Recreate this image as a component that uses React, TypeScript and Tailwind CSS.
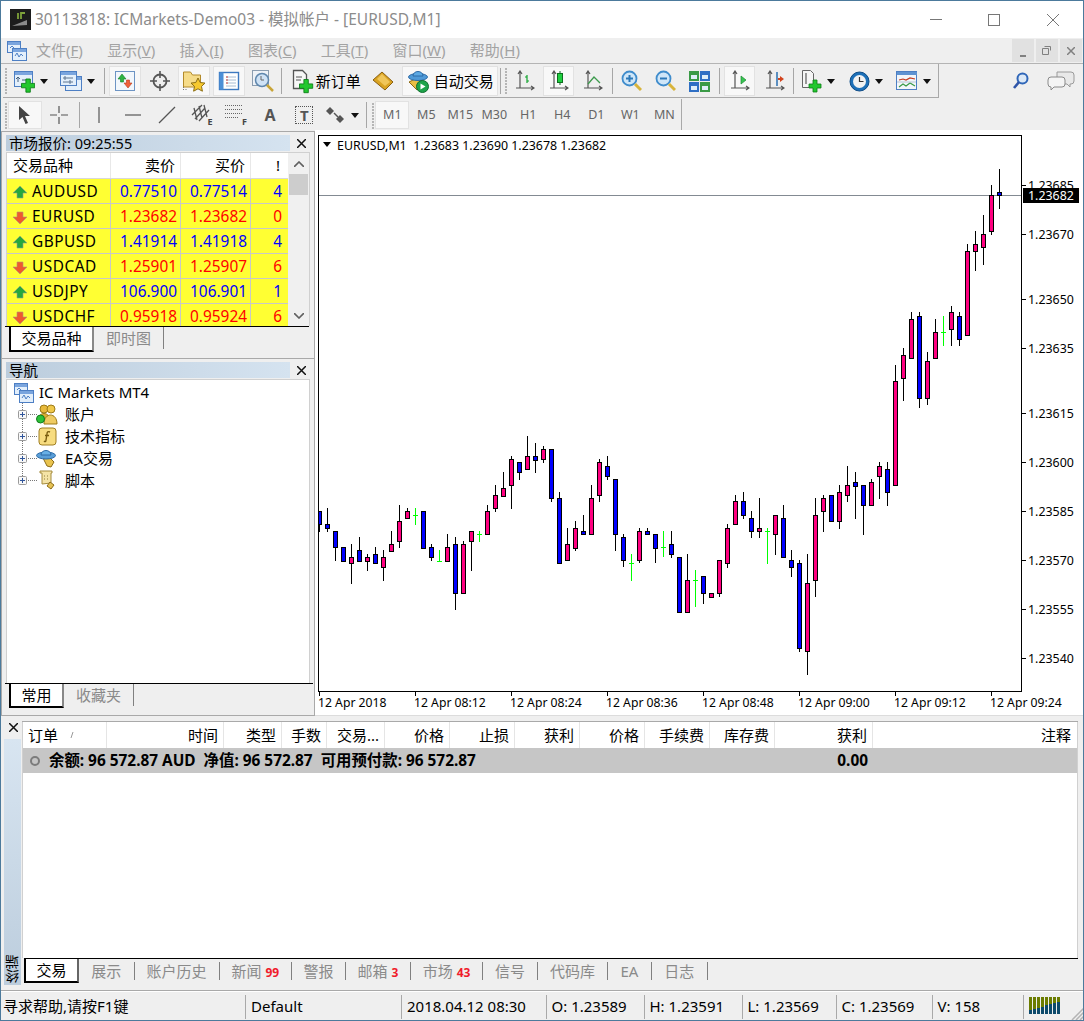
import type { ReactNode } from 'react';

// [wick top, body top, body bottom, wick bottom, kind] in screen pixels, one candle every 8px
type Candle = [number, number, number, number, 'u' | 'd' | 'g'];

const candles: Candle[] = [
    [511, 511, 524, 532, 'd'], [508, 524, 528, 532, 'd'], [531, 531, 547, 561, 'd'], [547, 547, 561, 561, 'd'],
    [544, 557, 563, 584, 'u'], [537, 550, 561, 561, 'd'], [554, 557, 561, 571, 'u'], [547, 554, 563, 563, 'd'],
    [550, 557, 567, 581, 'u'], [531, 544, 551, 551, 'u'], [505, 521, 541, 548, 'u'], [508, 511, 518, 518, 'u'],
    [508, 515, 515, 525, 'g'], [511, 511, 548, 548, 'd'], [544, 547, 557, 561, 'd'], [550, 561, 561, 561, 'g'],
    [534, 547, 561, 561, 'u'], [537, 544, 593, 610, 'd'], [541, 544, 593, 593, 'u'], [531, 531, 541, 571, 'u'],
    [531, 534, 534, 542, 'g'], [505, 511, 534, 534, 'u'], [485, 495, 508, 512, 'u'], [472, 488, 496, 496, 'u'],
    [456, 459, 485, 509, 'u'], [462, 462, 472, 480, 'd'], [436, 456, 469, 469, 'u'], [443, 456, 460, 473, 'd'],
    [446, 449, 459, 463, 'u'], [449, 449, 498, 502, 'd'], [492, 498, 563, 563, 'd'], [528, 544, 560, 560, 'u'],
    [521, 528, 548, 551, 'u'], [515, 531, 534, 534, 'd'], [485, 498, 534, 534, 'u'], [459, 462, 495, 502, 'u'],
    [456, 466, 476, 480, 'd'], [479, 479, 534, 551, 'd'], [534, 537, 560, 567, 'd'], [554, 563, 563, 581, 'g'],
    [528, 531, 560, 563, 'u'], [528, 531, 534, 534, 'd'], [534, 534, 548, 563, 'd'], [531, 547, 547, 557, 'g'],
    [531, 544, 554, 558, 'd'], [557, 557, 612, 612, 'd'], [554, 580, 612, 612, 'u'], [570, 580, 580, 607, 'g'],
    [576, 576, 593, 604, 'd'], [593, 593, 597, 597, 'u'], [560, 560, 593, 597, 'u'], [524, 528, 563, 568, 'u'],
    [495, 501, 524, 524, 'u'], [492, 501, 515, 519, 'd'], [511, 518, 531, 538, 'd'], [498, 528, 531, 538, 'u'],
    [528, 531, 531, 564, 'g'], [515, 515, 534, 555, 'u'], [505, 518, 557, 557, 'd'], [550, 560, 567, 577, 'd'],
    [560, 563, 648, 652, 'd'], [554, 583, 651, 675, 'u'], [498, 515, 580, 597, 'u'], [495, 498, 511, 532, 'u'],
    [495, 495, 521, 521, 'd'], [485, 492, 521, 529, 'u'], [466, 485, 495, 502, 'u'], [472, 482, 486, 519, 'd'],
    [485, 485, 505, 535, 'd'], [479, 482, 505, 505, 'u'], [462, 466, 476, 499, 'u'], [462, 469, 492, 506, 'd'],
    [365, 381, 485, 485, 'u'], [348, 355, 378, 401, 'u'], [312, 319, 358, 358, 'u'], [312, 316, 398, 408, 'd'],
    [352, 361, 398, 405, 'u'], [319, 332, 358, 358, 'u'], [316, 332, 332, 346, 'g'], [306, 312, 329, 346, 'u'],
    [312, 316, 339, 346, 'd'], [244, 251, 335, 335, 'u'], [231, 244, 251, 271, 'u'], [215, 234, 247, 265, 'u'],
    [185, 195, 231, 235, 'u'], [169, 192, 195, 209, 'd'],
];

const priceLabels: [string, number][] = [
    ['1.23685', 185], ['1.23670', 234], ['1.23650', 299], ['1.23635', 348], ['1.23615', 413],
    ['1.23600', 462], ['1.23585', 511], ['1.23570', 560], ['1.23555', 609], ['1.23540', 658],
];

const timeLabels: [string, number][] = [
    ['12 Apr 2018', 319], ['12 Apr 08:12', 415], ['12 Apr 08:24', 511], ['12 Apr 08:36', 607],
    ['12 Apr 08:48', 703], ['12 Apr 09:00', 799], ['12 Apr 09:12', 895], ['12 Apr 09:24', 991],
];

const quotes = [
    { symbol: 'AUDUSD', bid: '0.77510', ask: '0.77514', spread: '4', up: true },
    { symbol: 'EURUSD', bid: '1.23682', ask: '1.23682', spread: '0', up: false },
    { symbol: 'GBPUSD', bid: '1.41914', ask: '1.41918', spread: '4', up: true },
    { symbol: 'USDCAD', bid: '1.25901', ask: '1.25907', spread: '6', up: false },
    { symbol: 'USDJPY', bid: '106.900', ask: '106.901', spread: '1', up: true },
    { symbol: 'USDCHF', bid: '0.95918', ask: '0.95924', spread: '6', up: false },
];

const columns = [
    { label: '时间', w: 'w-[117.5px]' }, { label: '类型', w: 'w-[58px]' }, { label: '手数', w: 'w-[45px]' },
    { label: '交易...', w: 'w-[58px]' }, { label: '价格', w: 'w-[65px]' }, { label: '止损', w: 'w-[65px]' },
    { label: '获利', w: 'w-[65px]' }, { label: '价格', w: 'w-[65px]' }, { label: '手续费', w: 'w-[65px]' },
    { label: '库存费', w: 'w-[65px]' }, { label: '获利', w: 'w-[98px]' },
];

const Caret = () => (
    <svg width="8" height="5" viewBox="0 0 8 5" className="shrink-0"><path d="M0 0h8L4 5z" fill="#111" /></svg>
);

const Ico = ({ children, w = 24, h = 24 }: { children: ReactNode; w?: number; h?: number }) => (
    <svg width={w} height={h} viewBox={`0 0 ${w} ${h}`} className="shrink-0">{children}</svg>
);

const GreenPlus = ({ x, y, s = 1 }: { x: number; y: number; s?: number }) => (
    <path
        transform={`translate(${x} ${y}) scale(${s})`}
        d="M4 0h4v4h4v4H8v4H4V8H0V4h4z"
        fill="#22c72e"
        stroke="#0d7d18"
        strokeWidth="0.8"
    />
);

const MiniWindow = ({ x, y, w, h }: { x: number; y: number; w: number; h: number }) => (
    <g>
        <rect x={x + 0.5} y={y + 0.5} width={w} height={h} fill="#e3effb" stroke="#4d7fc4" />
        <rect x={x + 1} y={y + 1} width={w - 1} height={3} fill="#7aa5de" />
    </g>
);

const ChartsIcon = () => (
    <Ico w={21} h={21}>
        <MiniWindow x={1} y={1} w={13} h={11} />
        <MiniWindow x={6} y={8} w={14} h={12} />
        <path d="M9 16l2-3 2 4 2-3 2 2" fill="none" stroke="#4d7fc4" />
        <path d="M4 8l2-2 2 2" fill="none" stroke="#4d7fc4" />
    </Ico>
);

const NewChartIcon = () => (
    <Ico w={22} h={24}>
        <MiniWindow x={1} y={2} w={18} h={15} />
        <path d="M5 13V8m-2 2 2-2 2 2M9 11h6" fill="none" stroke="#46607c" />
        <GreenPlus x={8.5} y={10} s={1.1} />
    </Ico>
);

const ProfilesIcon = () => (
    <Ico w={23} h={24}>
        <MiniWindow x={6} y={7} w={16} h={14} />
        <MiniWindow x={1} y={2} w={16} h={14} />
        <path d="M4 9h10M4 13h10M6 7v4M11 11v4" fill="none" stroke="#5c7590" />
    </Ico>
);

const MarketIcon = () => (
    <Ico w={22} h={22}>
        <rect x="1.5" y="1.5" width="19" height="19" fill="#f2f7fc" stroke="#6d94c4" />
        <path d="M4 9l4-5 4 5H9.5v3h-3V9z" fill="#2fb344" stroke="#168026" strokeWidth=".6" />
        <path d="M10 13l4 5 4-5h-2.5v-3h-3v3z" fill="#f0603a" stroke="#b83a18" strokeWidth=".6" />
    </Ico>
);

const TargetIcon = () => (
    <Ico w={22} h={22}>
        <circle cx="11" cy="11" r="6.5" fill="#eee" stroke="#555" strokeWidth="1.8" />
        <path d="M11 1v7M11 14v7M1 11h7M14 11h7" stroke="#555" strokeWidth="1.6" />
    </Ico>
);

const FavoritesIcon = () => (
    <Ico w={24} h={24}>
        <path d="M1.5 3h7l2 3h8v12h-17z" fill="#f6dc8a" stroke="#b38a2a" />
        <path d="M1.5 18v4M4 20v2" stroke="#777" strokeDasharray="1 1" />
        <path d="M16 9l2.2 4.5 4.8.6-3.5 3.3.9 4.8-4.4-2.4-4.4 2.4.9-4.8-3.5-3.3 4.8-.6z" fill="#f7c92e" stroke="#8c6e14" />
    </Ico>
);

const TerminalIcon = () => (
    <Ico w={22} h={22}>
        <rect x="1.5" y="2.5" width="19" height="17" fill="#fff" stroke="#3d79c0" strokeWidth="1.4" />
        <rect x="1.5" y="2.5" width="4" height="17" fill="#4c8fd6" />
        <path d="M8 7h10M8 10h10M8 13h10M8 16h10" stroke="#a8bcd2" />
        <path d="M8 7h2M8 10h2M8 13h2" stroke="#d2453a" />
    </Ico>
);

const TesterIcon = () => (
    <Ico w={24} h={24}>
        <rect x="1.5" y="1.5" width="16" height="15" fill="#eef2f7" stroke="#8b9db0" />
        <circle cx="11" cy="11" r="6.5" fill="#cfe2f5" stroke="#5f87ad" strokeWidth="1.5" />
        <path d="M10 7v4h3" fill="none" stroke="#666" />
        <path d="M16 16l6 6" stroke="#c9a538" strokeWidth="2.5" />
    </Ico>
);

const NewOrderIcon = () => (
    <Ico w={23} h={25}>
        <path d="M2.5 1.5h9l4 4v14h-13z" fill="#f7f7f7" stroke="#555" strokeWidth="1.3" />
        <path d="M5 8h6M5 11h5" stroke="#555" />
        <GreenPlus x={8.5} y={10.5} s={1.1} />
    </Ico>
);

const EditorIcon = () => (
    <Ico w={22} h={20}>
        <path d="M10 1l11 10-8 8L1 9z" fill="#d9a322" stroke="#8a5f10" />
        <path d="M10 3l8 8-5 4-8-7z" fill="#f0c65a" />
    </Ico>
);

const AutoIcon = () => (
    <Ico w={22} h={23}>
        <path d="M2 12l8 8 8-6-6-7z" fill="#e9be45" stroke="#8c6c18" />
        <ellipse cx="11" cy="7" rx="9.5" ry="3.5" fill="#4f9ad8" stroke="#2c6aa6" />
        <path d="M6 6c0-6 10-6 10 0z" fill="#5ca9e4" stroke="#2c6aa6" />
        <circle cx="15.5" cy="16.5" r="6" fill="#1ea34a" stroke="#0e6e2d" />
        <path d="M13.5 13.5v6l5-3z" fill="#fff" />
    </Ico>
);

const Axes = () => <path d="M5 1v17M1 18h18M3 4l2-3 2 3M16 16l3 2-3 2" fill="none" stroke="#555" strokeWidth="1.2" />;

const BarChartIcon = () => (
    <Ico w={20} h={22}>
        <Axes />
        <path d="M12 5v8M10 7h2M12 11h2" stroke="#0fa32c" strokeWidth="1.2" fill="none" />
    </Ico>
);

const CandleIcon = () => (
    <Ico w={20} h={22}>
        <Axes />
        <path d="M11 1v14" stroke="#0b6e1e" />
        <rect x="8.5" y="3.5" width="5" height="9" fill="#1fcf3f" stroke="#0b6e1e" />
    </Ico>
);

const LineIcon = () => (
    <Ico w={20} h={22}>
        <Axes />
        <path d="M5 14l6-7 6 6" fill="none" stroke="#3c9a4c" strokeWidth="1.3" />
    </Ico>
);

const ZoomIcon = ({ plus }: { plus?: boolean }) => (
    <Ico w={21} h={22}>
        <circle cx="8.5" cy="8.5" r="7" fill="#cfe6f8" stroke="#3f8ccc" strokeWidth="1.8" />
        <path d={plus ? 'M5 8.5h7M8.5 5v7' : 'M5 8.5h7'} stroke="#2c78b8" strokeWidth="2" />
        <path d="M14 14l6 6" stroke="#d8b43c" strokeWidth="3" />
    </Ico>
);

const TileIcon = () => (
    <Ico w={21} h={21}>
        <rect x="0" y="0" width="10" height="10" fill="#3a9a46" />
        <rect x="11" y="0" width="10" height="10" fill="#2f6fc4" />
        <rect x="0" y="11" width="10" height="10" fill="#2f6fc4" />
        <rect x="11" y="11" width="10" height="10" fill="#3a9a46" />
        <path d="M2 4h6v4H2zM13 4h6v4h-6zM2 15h6v4H2zM13 15h6v4h-6z" fill="#dfeef8" />
    </Ico>
);

const ScrollIcon = () => (
    <Ico w={20} h={22}>
        <Axes />
        <path d="M11 6v8l5-4z" fill="#38c452" stroke="#1a8a30" strokeWidth=".7" />
    </Ico>
);

const ShiftIcon = () => (
    <Ico w={20} h={22}>
        <Axes />
        <path d="M12 2v14" stroke="#2a6fb0" strokeWidth="1.5" />
        <path d="M19 9l-4-3v2h-2v2h2v2z" fill="#d2431c" />
    </Ico>
);

const IndicatorIcon = () => (
    <Ico w={21} h={24}>
        <path d="M1.5 1.5h8l3 3v14h-11z" fill="#f5f5f5" stroke="#666" />
        <path d="M5 4v11" stroke="#666" strokeWidth="1.3" />
        <GreenPlus x={8} y={11} />
    </Ico>
);

const ClockIcon = () => (
    <Ico w={21} h={21}>
        <circle cx="10.5" cy="10.5" r="9.5" fill="#1d70b8" stroke="#0c4a86" />
        <circle cx="10.5" cy="10.5" r="6.5" fill="#f2f2f2" />
        <path d="M10.5 6v4.5h4" fill="none" stroke="#333" strokeWidth="1.2" />
    </Ico>
);

const TemplateIcon = () => (
    <Ico w={22} h={20}>
        <rect x=".5" y=".5" width="20" height="18" fill="#f3f6fa" stroke="#4d7fc4" />
        <rect x="1" y="1" width="20" height="3" fill="#5f93d2" />
        <path d="M3 9l4-1 3 1 4-2 5 1" fill="none" stroke="#c4391e" strokeWidth="1.2" />
        <path d="M3 16l4-3 3 2 4-3 5 3" fill="none" stroke="#3a9a46" strokeWidth="1.2" />
        <path d="M1 11h19" stroke="#b7c6d6" />
    </Ico>
);

const SearchIcon = () => (
    <Ico w={17} h={18}>
        <circle cx="10.5" cy="6.5" r="5" fill="#dbe8f6" stroke="#2f66b8" strokeWidth="2" />
        <path d="M7 10l-5 6" stroke="#2f55a8" strokeWidth="2.6" />
    </Ico>
);

const ChatIcon = () => (
    <Ico w={28} h={20}>
        <path d="M10 1h14a3 3 0 0 1 3 3v6a3 3 0 0 1-3 3h-1v3l-3-3H10z" fill="#e8e8e8" stroke="#9a9a9a" />
        <path d="M4 6h11a3 3 0 0 1 3 3v4a3 3 0 0 1-3 3H7l-3 3v-3a3 3 0 0 1-3-3V9a3 3 0 0 1 3-3z" fill="#f4f4f4" stroke="#8a8a8a" />
    </Ico>
);

const CursorIcon = () => (
    <Ico w={16} h={20}><path d="M2 1l11 10H8l3 7-2.5 1-3-7L2 15z" fill="#444" /></Ico>
);

const CrossIcon = () => (
    <Ico w={20} h={20}><path d="M10 1v7M10 12v7M1 10h7M12 10h7" stroke="#555" strokeWidth="1.2" /></Ico>
);

const VLineIcon = () => <Ico w={4} h={18}><path d="M2 1v16" stroke="#555" strokeWidth="1.2" /></Ico>;
const HLineIcon = () => <Ico w={18} h={4}><path d="M1 2h16" stroke="#555" strokeWidth="1.2" /></Ico>;
const TrendIcon = () => <Ico w={18} h={18}><path d="M1 17L17 1" stroke="#555" strokeWidth="1.2" /></Ico>;

const ChannelIcon = () => (
    <div className="relative h-[22px] w-[22px]">
        <svg width="20" height="18" viewBox="0 0 20 18">
            <path d="M1 11L11 1M4 15L14 4M8 17L18 6M3 4l3 12M8 2l3 12M13 1l3 12" stroke="#555" strokeWidth="1.3" fill="none" />
        </svg>
        <span className="absolute bottom-0 right-0 text-[9px] leading-none font-bold text-[#444]">E</span>
    </div>
);

const FiboIcon = () => (
    <div className="relative h-[22px] w-[22px]">
        <svg width="18" height="17" viewBox="0 0 18 17">
            <path d="M0 1.5h18M0 5.5h18M0 9.5h18M0 13.5h14" stroke="#666" strokeDasharray="1 1" />
        </svg>
        <span className="absolute bottom-0 right-0 text-[9px] leading-none font-bold text-[#444]">F</span>
    </div>
);

const TextBoxIcon = () => (
    <div className="flex h-[18px] w-[18px] items-center justify-center border border-dotted border-[#555] text-[15px] leading-none font-bold text-[#555]">T</div>
);

const ShapesIcon = () => (
    <Ico w={20} h={20}>
        <path d="M4 2l4 4-4 4-4-4zM14 10l4 4-4 4-4-4z" fill="#555" />
        <path d="M8 8l4 4" stroke="#555" strokeWidth="1.4" />
    </Ico>
);

const ArrowIcon = ({ up }: { up: boolean }) => (
    <Ico w={16} h={15}>
        {up ? (
            <path d="M8 1l7 7h-4v5H5V8H1z" fill="#27a83c" stroke="#8fa08f" strokeWidth=".6" />
        ) : (
            <path d="M8 14l7-7h-4V2H5v5H1z" fill="#ee5a2e" stroke="#b09080" strokeWidth=".6" />
        )}
    </Ico>
);

const Grip = () => (
    <div className="flex h-full w-[5px] shrink-0 flex-col items-center gap-[1px] py-[3px]">
        {Array.from({ length: 9 }).map((_, i) => (
            <span key={i} className="h-[2px] w-[2px] shrink-0 bg-[#b5b5b5]" />
        ))}
    </div>
);

const Sep = ({ className }: { className: string }) => (
    <div className={`flex h-full shrink-0 items-center justify-center ${className}`}>
        <span className="h-[26px] w-px bg-[#a6a6a6]" />
    </div>
);

const Btn = ({ className = 'w-[34.2px]', active, children }: { className?: string; active?: boolean; children: ReactNode }) => (
    <div className={`flex h-full shrink-0 items-center justify-center py-[1px] ${className}`}>
        <div className={`flex h-full w-full items-center justify-center gap-[5px] border ${active ? 'border-[#e2e2e2] bg-[#f8f8f8]' : 'border-transparent'}`}>
            {children}
        </div>
    </div>
);

const TitleBar = () => (
    <div className="flex h-[37px] shrink-0 items-center bg-white">
        <svg width="21" height="21" viewBox="0 0 21 21" className="ml-[10px] shrink-0">
            <rect width="21" height="21" fill="#1c1c1c" />
            <path d="M2 17L17 11v5z" fill="#8a8a8a" />
            <path d="M8 4v6M11 10V4h4" fill="none" stroke="#7ea23a" strokeWidth="1.8" />
        </svg>
        <span className="ml-[4px] text-[15.5px] whitespace-nowrap text-[#8c8c8c]">30113818: ICMarkets-Demo03 - 模拟帐户 - [EURUSD,M1]</span>
        <div className="ml-auto flex items-center pr-[25px]">
            <span className="h-px w-[12px] bg-[#777]" />
            <span className="ml-[46px] h-[12px] w-[12px] border border-[#777]" />
            <svg width="12" height="12" viewBox="0 0 12 12" className="ml-[47px]"><path d="M0 0l12 12M12 0L0 12" stroke="#777" /></svg>
        </div>
    </div>
);

const MenuItem = ({ label, hot }: { label: string; hot: string }) => (
    <span className="whitespace-nowrap">{label}(<span className="underline">{hot}</span>)</span>
);

const MenuBar = () => (
    <div className="flex h-[26px] shrink-0 items-center border-b border-[#b4b4b4] pl-[6px] text-[15px] text-[#a3a3a3]">
        <ChartsIcon />
        <div className="ml-[9px] flex gap-[24.3px]">
            <MenuItem label="文件" hot="F" />
            <MenuItem label="显示" hot="V" />
            <MenuItem label="插入" hot="I" />
            <MenuItem label="图表" hot="C" />
            <MenuItem label="工具" hot="T" />
            <MenuItem label="窗口" hot="W" />
            <MenuItem label="帮助" hot="H" />
        </div>
        <div className="ml-auto flex gap-[1.5px] pr-[2px] text-[#808080]">
            <span className="flex h-[23px] w-[22.5px] items-end justify-center bg-[#e1e1e1] pb-[5px]"><span className="h-[2px] w-[6px] bg-[#808080]" /></span>
            <span className="flex h-[23px] w-[22.5px] items-center justify-center bg-[#e1e1e1]">
                <svg width="9" height="9" viewBox="0 0 9 9"><path d="M2.5.5h6v4M.5 2.5h6v6h-6z" fill="none" stroke="#808080" /></svg>
            </span>
            <span className="flex h-[23px] w-[22.5px] items-center justify-center bg-[#e1e1e1]">
                <svg width="8" height="8" viewBox="0 0 8 8"><path d="M0 0l8 8M8 0L0 8" stroke="#808080" strokeWidth="1.5" /></svg>
            </span>
        </div>
    </div>
);

const ToolbarOne = () => (
    <div className="flex h-[34px] shrink-0 items-center text-[15px] text-black">
        <div className="ml-[3px] flex h-full w-[936px] shrink-0 items-center border-r border-b border-[#a9a9a9] pt-[1px]">
            <Grip />
            <Btn className="w-[45px]"><NewChartIcon /><Caret /></Btn>
            <Btn className="w-[47px]"><ProfilesIcon /><Caret /></Btn>
            <Sep className="w-[9px]" />
            <Btn className="w-[32px] mr-[2.6px]" active><MarketIcon /></Btn>
            <Btn className="w-[32px] mr-[2.6px]"><TargetIcon /></Btn>
            <Btn className="w-[32px] mr-[2.6px]" active><FavoritesIcon /></Btn>
            <Btn className="w-[32px] mr-[2.6px]" active><TerminalIcon /></Btn>
            <Btn className="w-[32px]"><TesterIcon /></Btn>
            <Sep className="w-[4px]" />
            <Btn className="w-[85px]"><NewOrderIcon /><span className="-ml-[3px] whitespace-nowrap">新订单</span></Btn>
            <Btn className="w-[30px]"><EditorIcon /></Btn>
            <Btn className="ml-[4px] w-[96px]" active><AutoIcon /><span className="whitespace-nowrap">自动交易</span></Btn>
            <Sep className="w-[5px]" />
            <Grip />
            <Btn className="w-[34px]"><BarChartIcon /></Btn>
            <Btn className="ml-[1px] w-[31px]" active><CandleIcon /></Btn>
            <Btn className="ml-[3px] w-[32px]"><LineIcon /></Btn>
            <Sep className="w-[6px]" />
            <Btn className="w-[32px]"><ZoomIcon plus /></Btn>
            <Btn className="ml-[2px] w-[33px]"><ZoomIcon /></Btn>
            <Btn className="ml-[2px] w-[31px]"><TileIcon /></Btn>
            <Sep className="w-[9px]" />
            <Btn className="w-[31px]" active><ScrollIcon /></Btn>
            <Btn className="ml-[4px] w-[32px]"><ShiftIcon /></Btn>
            <Sep className="w-[5px]" />
            <Btn className="w-[44px]"><IndicatorIcon /><Caret /></Btn>
            <Btn className="ml-[3px] w-[45px]"><ClockIcon /><Caret /></Btn>
            <Btn className="ml-[3px] w-[44px]"><TemplateIcon /><Caret /></Btn>
        </div>
        <div className="ml-auto flex items-center gap-[18px] pr-[9px]">
            <SearchIcon />
            <ChatIcon />
        </div>
    </div>
);

const TIMEFRAMES = ['M5', 'M15', 'M30', 'H1', 'H4', 'D1', 'W1', 'MN'];

const ToolbarTwo = () => (
    <div className="mt-px flex h-[31px] shrink-0 items-center">
        <div className="ml-[3px] flex h-full w-[679px] shrink-0 items-center border-r border-[#a9a9a9] pt-[1px]">
            <Grip />
            <Btn className="w-[34px]" active><CursorIcon /></Btn>
            <Btn className="w-[34px]"><CrossIcon /></Btn>
            <Sep className="w-[6px]" />
            <Btn><VLineIcon /></Btn>
            <Btn><HLineIcon /></Btn>
            <Btn><TrendIcon /></Btn>
            <Btn><ChannelIcon /></Btn>
            <Btn><FiboIcon /></Btn>
            <Btn><span className="text-[16px] leading-none font-bold text-[#555]">A</span></Btn>
            <Btn><TextBoxIcon /></Btn>
            <Btn className="w-[42px]"><ShapesIcon /><Caret /></Btn>
            <Sep className="w-[7px]" />
            <Grip />
            <Btn className="w-[34px]" active><span className="text-[12.5px] text-[#666]">M1</span></Btn>
            {TIMEFRAMES.map((tf) => (
                <Btn key={tf} className="w-[34px]"><span className="text-[12.5px] text-[#666]">{tf}</span></Btn>
            ))}
        </div>
    </div>
);

const PanelTitle = ({ children }: { children: ReactNode }) => (
    <div className="flex h-[16px] shrink-0 items-center pl-[4px]">
        <div className="flex h-full w-[284px] items-center bg-gradient-to-r from-[#bccddd] to-[#d5e3f0] pl-[3px] text-[14.5px] leading-none whitespace-nowrap text-black">
            {children}
        </div>
        <svg width="9" height="9" viewBox="0 0 9 9" className="ml-[7px]"><path d="M0 0l9 9M9 0L0 9" stroke="#111" strokeWidth="1.5" /></svg>
    </div>
);

const Chevron = ({ up }: { up: boolean }) => (
    <svg width="10" height="6" viewBox="0 0 10 6"><path d={up ? 'M0 6l5-5 5 5' : 'M0 0l5 5 5-5'} fill="none" stroke="#606060" strokeWidth="1.6" /></svg>
);

const MarketWatch = () => (
    <div className="flex h-[228px] shrink-0 flex-col border border-[#a9a9a9] pt-[3px]">
        <PanelTitle>市场报价: 09:25:55</PanelTitle>
        <div className="mx-[4px] mt-[1px] flex h-[174px] shrink-0 border-x border-t border-[#d0d0d0] bg-white">
            <div className="h-full w-[281px] shrink-0 overflow-hidden">
                <div className="flex h-[26px] items-center border-b border-[#d8d8d8] text-[15px] text-black">
                    <div className="flex h-full w-[104px] items-center border-r border-[#e8e8e8] pl-[6px]">交易品种</div>
                    <div className="flex h-full w-[70px] items-center justify-end border-r border-[#e8e8e8] pr-[5px]">卖价</div>
                    <div className="flex h-full w-[70px] items-center justify-end border-r border-[#e8e8e8] pr-[5px]">买价</div>
                    <div className="flex h-full w-[36px] items-center justify-end pr-[7px]">!</div>
                </div>
                {quotes.map((q) => (
                    <div key={q.symbol} className="flex h-[25px] shrink-0 items-center border-b border-[#c8c8c8] bg-[#ffff33] text-[15.4px]">
                        <div className="flex h-full w-[104px] items-center gap-[4px] border-r border-[#c8c8c8] pt-[2px] pl-[5px] tracking-[0.5px] text-black"><ArrowIcon up={q.up} />{q.symbol}</div>
                        <div className={`flex h-full w-[70px] items-center justify-end border-r border-[#c8c8c8] pt-[2px] pr-[3px] ${q.up ? 'text-[#0000ff]' : 'text-[#ff0000]'}`}>{q.bid}</div>
                        <div className={`flex h-full w-[70px] items-center justify-end border-r border-[#c8c8c8] pt-[2px] pr-[3px] ${q.up ? 'text-[#0000ff]' : 'text-[#ff0000]'}`}>{q.ask}</div>
                        <div className={`flex h-full w-[36px] items-center justify-end pt-[2px] pr-[5px] ${q.up ? 'text-[#0000ff]' : 'text-[#ff0000]'}`}>{q.spread}</div>
                    </div>
                ))}
            </div>
            <div className="flex w-[21px] flex-col items-center bg-[#f0f0f0]">
                <div className="flex h-[21px] items-center justify-center"><Chevron up /></div>
                <div className="h-[21px] w-[19px] bg-[#cdcdcd]" />
                <div className="mt-auto flex h-[21px] items-center justify-center"><Chevron up={false} /></div>
            </div>
        </div>
        <div className="flex h-[26px] shrink-0 border-t border-black ml-[3px] mr-[5px] text-[15px]">
            <div className="ml-[4px] flex h-[25px] w-[85px] items-center justify-center border-x-2 border-b-2 border-l-black border-r-[#888] border-b-black bg-white text-black">交易品种</div>
            <div className="flex h-[22px] w-[70px] items-center justify-center border-r border-[#808080] text-[#8a8a8a]">即时图</div>
        </div>
    </div>
);

const treeItems = ['账户', '技术指标', 'EA交易', '脚本'];

const TreeIcon = ({ kind }: { kind: number }) => {
    if (kind === 0) {
        return (
            <Ico w={22} h={21}>
                <circle cx="8" cy="5" r="4" fill="#e8b93a" stroke="#9c7a18" />
                <path d="M2 17c0-10 12-10 12 0z" fill="#dcae34" stroke="#9c7a18" />
                <circle cx="15" cy="5" r="4" fill="#f0c84a" stroke="#9c7a18" />
                <path d="M8 20c0-12 13-12 13 0z" fill="#efcb62" stroke="#9c7a18" />
                <circle cx="4.5" cy="15" r="4" fill="#2cc238" stroke="#127a1c" />
            </Ico>
        );
    }
    if (kind === 1) {
        return (
            <Ico w={19} h={19}>
                <rect x="1" y="1" width="17" height="17" rx="3" fill="#f7dc80" stroke="#a07f22" />
                <path d="M12 5c-2-1-3 0-3 2l-1 6c0 2-1 2-2 1M7 8.5h4" fill="none" stroke="#7a5e10" strokeWidth="1.4" />
            </Ico>
        );
    }
    if (kind === 2) {
        return (
            <Ico w={22} h={19}>
                <path d="M7 9l4 8 4 1 3-5-4-4z" fill="#e9c34e" stroke="#8c6c18" />
                <ellipse cx="10" cy="6.5" rx="9.5" ry="3.5" fill="#5a9fd8" stroke="#2c6aa6" />
                <path d="M5 6C5 0 15 0 15 6z" fill="#68b0e6" stroke="#2c6aa6" />
            </Ico>
        );
    }
    return (
        <Ico w={20} h={20}>
            <path d="M3 1h12v2h-1v10l-9 1V3H3z" fill="#f4e3a6" stroke="#a58c3e" />
            <path d="M13 12l4 3-3 4-4-3z" fill="#e6c254" stroke="#8c6c18" />
            <path d="M7 6h1M10 6h1M7 9h1M10 9h1" stroke="#8c7a3c" />
        </Ico>
    );
};

const TreeRow = ({ label, kind, last }: { label: string; kind: number; last: boolean }) => (
    <div className="flex h-[22px] items-center text-[15px] text-black">
        <svg width="24" height="22" viewBox="0 0 24 22" className="shrink-0">
            <path d={last ? 'M9.5 0v11' : 'M9.5 0v22'} stroke="#777" strokeDasharray="1 1" />
            <path d="M13 11.5h11" stroke="#777" strokeDasharray="1 1" />
            <rect x="5.5" y="7.5" width="8" height="8" rx="1" fill="#f8f8f8" stroke="#9a9a9a" />
            <path d="M7 11.5h5M9.5 9v5" stroke="#30559a" />
        </svg>
        <div className="flex w-[20px] shrink-0 justify-center"><TreeIcon kind={kind} /></div>
        <span className="ml-[8px] whitespace-nowrap">{label}</span>
    </div>
);

const Navigator = () => (
    <div className="-mt-px flex flex-1 flex-col border border-[#a9a9a9] pt-[3px]">
        <PanelTitle>导航</PanelTitle>
        <div className="mx-[4px] mt-[1px] flex-1 border-x border-t border-[#d0d0d0] bg-white pt-[1px] pl-[6px]">
            <div className="flex h-[22px] items-center text-[15px] text-black">
                <ChartsIcon />
                <span className="ml-[5px] whitespace-nowrap">IC Markets MT4</span>
            </div>
            {treeItems.map((label, i) => (
                <TreeRow key={label} label={label} kind={i} last={i === treeItems.length - 1} />
            ))}
        </div>
        <div className="ml-[3px] mr-[1px] flex h-[32px] shrink-0 border-t border-black text-[15px]">
            <div className="ml-[4px] flex h-[24px] w-[55px] items-center justify-center border-x-2 border-b-2 border-l-black border-r-[#888] border-b-black bg-white text-black">常用</div>
            <div className="flex h-[22px] w-[70px] items-center justify-center border-r border-[#808080] text-[#8a8a8a]">收藏夹</div>
        </div>
    </div>
);

const Chart = () => (
    <div className="flex-1 border-b border-[#dcdcdc] bg-white pl-[3px]">
        <svg width="766" height="580" viewBox="318 135 766 580" className="mt-[5px] block" shapeRendering="crispEdges">
            <defs>
                <clipPath id="plot"><rect x="319" y="136" width="702" height="555" /></clipPath>
            </defs>
            <rect x="318.5" y="135.5" width="703" height="556" fill="#fff" stroke="#000" />
            <g clipPath="url(#plot)">
                <path d="M319 195.5h702" stroke="#838a92" />
                {candles.map(([wt, bt, bb, wb, kind], i) => {
                    const c = 319 + 8 * i;
                    if (kind === 'g') {
                        return (
                            <g key={i} stroke="#00ff00">
                                <path d={`M${c + 0.5} ${wt}V${wb}`} />
                                <path d={`M${c - 2} ${bt + 0.5}h5`} />
                            </g>
                        );
                    }
                    return (
                        <g key={i}>
                            <path d={`M${c + 0.5} ${wt}V${wb}`} stroke="#000" />
                            <rect
                                x={c - 1.5}
                                y={bt + 0.5}
                                width={4}
                                height={bb - bt}
                                fill={kind === 'u' ? '#ff0080' : '#0000ff'}
                                stroke="#000"
                            />
                        </g>
                    );
                })}
            </g>
            <path d="M323 142h8l-4 5z" fill="#000" shapeRendering="auto" />
            <g fontFamily="'Noto Sans', sans-serif" fontSize="12.4" fill="#000" shapeRendering="auto">
                <text x="337" y="149.5" className="whitespace-pre">EURUSD,M1  1.23683 1.23690 1.23678 1.23682</text>
                {priceLabels.map(([label, y]) => (
                    <g key={label}>
                        <path d={`M1022 ${y + 0.5}h4`} stroke="#000" shapeRendering="crispEdges" />
                        <text x="1028" y={y + 4.5}>{label}</text>
                    </g>
                ))}
                {timeLabels.map(([label, x]) => (
                    <g key={label}>
                        <path d={`M${x + 0.5} 692v4`} stroke="#000" shapeRendering="crispEdges" />
                        <text x={x - 1} y="707" fontSize="12.2">{label}</text>
                    </g>
                ))}
                <rect x="1023" y="188" width="56" height="14.5" fill="#000" shapeRendering="crispEdges" />
                <text x="1028" y="200" fill="#fff">1.23682</text>
            </g>
        </svg>
    </div>
);

const TabItem = ({ label, badge, w }: { label: string; badge?: string; w: string }) => (
    <div className={`mt-[3px] flex h-[18px] shrink-0 items-center justify-center gap-[4px] border-r border-[#808080] text-[#8a8a8a] ${w}`}>
        <span className="whitespace-nowrap">{label}</span>
        {badge && <span className="mt-[4px] text-[12px] leading-none font-bold text-[#f01c2c]">{badge}</span>}
    </div>
);

const Terminal = () => (
    <div className="flex h-[275px] shrink-0 border-b border-[#a9a9a9] pl-[4px]">
        <div className="flex w-[17px] shrink-0 flex-col pb-[5px]">
            <div className="flex h-[23px] shrink-0 items-center justify-center pl-[2px]">
                <svg width="9" height="9" viewBox="0 0 9 9"><path d="M0 0l9 9M9 0L0 9" stroke="#111" strokeWidth="1.5" /></svg>
            </div>
            <div className="flex flex-1 items-end justify-center bg-gradient-to-b from-[#d8e5f1] to-[#bccddd] pb-[2px]">
                <span className="rotate-180 text-[14px] leading-none text-black [writing-mode:vertical-rl]">终端</span>
            </div>
        </div>
        <div className="mt-[5px] ml-px flex w-[1056px] shrink-0 flex-col border-t border-[#a9a9a9]">
            <div className="flex-1 border-x border-[#d0d0d0] bg-white">
                <div className="flex h-[26px] items-center text-[15px] text-black">
                    <div className="flex h-full w-[83.5px] shrink-0 items-center gap-[12px] border-r border-[#e5e5e5] pl-[5px]">
                        订单
                        <svg width="4" height="6" viewBox="0 0 4 6"><path d="M1 6l2-6" stroke="#999" /></svg>
                    </div>
                    {columns.map((col, i) => (
                        <div key={i} className={`flex h-full shrink-0 items-center justify-end border-r border-[#e5e5e5] pr-[5px] ${col.w}`}>{col.label}</div>
                    ))}
                    <div className="flex h-full flex-1 items-center justify-end pr-[6px]">注释</div>
                </div>
                <div className="flex h-[25px] items-center bg-[#c6c6c6] text-[15.4px] font-bold text-black">
                    <svg width="12" height="12" viewBox="0 0 12 12" className="ml-[6px] shrink-0">
                        <circle cx="6" cy="6" r="4" fill="#c6c6c6" stroke="#7c7c7c" strokeWidth="2" />
                    </svg>
                    <span className="ml-[8px] whitespace-pre">余额: 96 572.87 AUD  净值: 96 572.87  可用预付款: 96 572.87</span>
                    <span className="ml-auto mr-[209px]">0.00</span>
                </div>
            </div>
            <div className="flex h-[32px] shrink-0 text-[15px]">
                <div className="w-[2px] shrink-0" />
                <div className="flex flex-1 border-t border-black">
                    <div className="flex h-[24px] w-[55px] shrink-0 items-center justify-center border-x-2 border-b-2 border-l-black border-r-[#666] border-b-black bg-white text-black">交易</div>
                    <TabItem label="展示" w="w-[55.5px]" />
                    <TabItem label="账户历史" w="w-[85px]" />
                    <TabItem label="新闻" badge="99" w="w-[72.5px]" />
                    <TabItem label="警报" w="w-[54px]" />
                    <TabItem label="邮箱" badge="3" w="w-[65px]" />
                    <TabItem label="市场" badge="43" w="w-[72px]" />
                    <TabItem label="信号" w="w-[55px]" />
                    <TabItem label="代码库" w="w-[70px]" />
                    <TabItem label="EA" w="w-[44px]" />
                    <TabItem label="日志" w="w-[55.5px]" />
                </div>
            </div>
        </div>
    </div>
);

const Signal = () => {
    const bars = [4, 5, 6, 7, 9, 10, 11, 12];
    return (
        <svg width="32" height="17" viewBox="0 0 32 17" className="ml-[5px] -mt-[3px]" shapeRendering="crispEdges">
            {bars.map((h, i) => (
                <g key={i}>
                    <rect x={i * 4} y="0" width="3" height={17 - h} fill="#6b7c00" />
                    <rect x={i * 4} y={17 - h} width="3" height={h} fill="#0d4a6b" />
                </g>
            ))}
        </svg>
    );
};

const statusCells = [
    { label: 'Default', w: 'w-[156px]' },
    { label: '2018.04.12 08:30', w: 'w-[144.5px]' },
    { label: 'O: 1.23589', w: 'w-[98px]' },
    { label: 'H: 1.23591', w: 'w-[98px]' },
    { label: 'L: 1.23569', w: 'w-[94px]' },
    { label: 'C: 1.23569', w: 'w-[96px]' },
    { label: 'V: 158', w: 'w-[91px]' },
];

const StatusBar = () => (
    <div className="relative flex h-[29px] shrink-0 items-center border-t border-white pt-[1px] text-[15px] text-black">
        <div className="flex h-full w-[245px] shrink-0 items-center pl-[3px] whitespace-nowrap">寻求帮助,请按F1键</div>
        {statusCells.map((cell) => (
            <div key={cell.label} className={`flex h-[24px] shrink-0 items-center border-l border-[#a9a9a9] pl-[5px] whitespace-nowrap ${cell.w}`}>{cell.label}</div>
        ))}
        <div className="flex h-[24px] items-center border-l border-[#a9a9a9]"><Signal /></div>
        <svg width="14" height="14" viewBox="0 0 14 14" className="absolute right-0 bottom-0">
            <path d="M14 2L2 14M14 6L6 14M14 10l-4 4" stroke="#b4b4b4" strokeWidth="1.5" />
        </svg>
    </div>
);

export default function App() {
    return (
        <div className="relative flex h-[1021px] w-[1084px] flex-col overflow-hidden border-t border-b border-[#4c7a9c] bg-[#efefef] font-['Noto_Sans','Noto_Sans_CJK_SC',sans-serif]">
            <TitleBar />
            <MenuBar />
            <ToolbarOne />
            <ToolbarTwo />
            <div className="flex h-[586px] shrink-0">
                <div className="ml-px flex w-[314px] shrink-0 flex-col pt-[1px]">
                    <MarketWatch />
                    <Navigator />
                </div>
                <Chart />
            </div>
            <Terminal />
            <StatusBar />
            <div className="pointer-events-none absolute inset-0 border-x border-[#4c7a9c]" />
        </div>
    );
}
